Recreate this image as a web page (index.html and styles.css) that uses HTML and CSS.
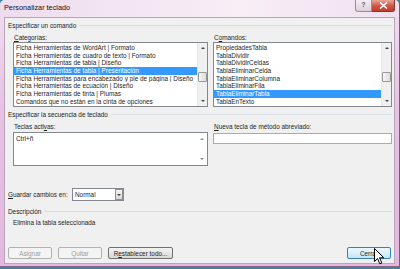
FILE: index.html
```html
<!DOCTYPE html>
<html lang="es">
<head>
  <meta charset="UTF-8">
  <title>Personalizar teclado</title>
  <link rel="stylesheet" href="styles.css">
</head>
<body>

  <div class="window">
    <div class="titlebar">
      <span class="title">Personalizar teclado</span>
      <div class="caption-btns">
        <span class="btn-help">?</span>
        <span class="btn-close">
          <svg width="9" height="7" viewBox="0 0 9 7"><path d="M1 0.5 L8 6.5 M8 0.5 L1 6.5" stroke="#fff" stroke-width="1.6"/></svg>
        </span>
      </div>
    </div>

    <div class="client">
      <div class="group-head"><span>Especificar un comando</span></div>
      <div class="cols">
        <div class="col col-left">
          <div class="lbl"><u>C</u>ategorías:</div>
          <div class="listbox">
            <ul class="items">
              <li>Ficha Herramientas de WordArt | Formato</li>
              <li>Ficha Herramientas de cuadro de texto | Formato</li>
              <li>Ficha Herramientas de tabla | Diseño</li>
              <li class="sel">Ficha Herramientas de tabla | Presentación</li>
              <li>Ficha Herramientas para encabezado y pie de página | Diseño</li>
              <li>Ficha Herramientas de ecuación | Diseño</li>
              <li>Ficha Herramientas de tinta | Plumas</li>
              <li>Comandos que no están en la cinta de opciones</li>
            </ul>
            <div class="vscroll">
              <span class="arrow up"></span>
              <span class="thumb"></span>
              <span class="arrow down"></span>
            </div>
          </div>
        </div>
        <div class="col col-right">
          <div class="lbl">C<u>o</u>mandos:</div>
          <div class="listbox">
            <ul class="items">
              <li>PropiedadesTabla</li>
              <li>TablaDividir</li>
              <li>TablaDividirCeldas</li>
              <li>TablaEliminarCelda</li>
              <li>TablaEliminarColumna</li>
              <li>TablaEliminarFila</li>
              <li class="sel">TablaEliminarTabla</li>
              <li>TablaEnTexto</li>
            </ul>
            <div class="vscroll">
              <span class="arrow up"></span>
              <span class="thumb"></span>
              <span class="arrow down"></span>
            </div>
          </div>
        </div>
      </div>

      <div class="group-head second"><span>Especificar la secuencia de teclado</span></div>
      <div class="cols">
        <div class="col col-left">
          <div class="lbl">Teclas acti<u>v</u>as:</div>
          <div class="keys-box">
            <span class="key-text">Ctrl+ñ</span>
            <div class="keys-scroll">
              <span class="arrow up dim"></span>
              <span class="arrow down dim"></span>
            </div>
          </div>
        </div>
        <div class="col col-right">
          <div class="lbl"><u>N</u>ueva tecla de método abreviado:</div>
          <div class="textbox"></div>
        </div>
      </div>

      <div class="save-row">
        <span class="save-lbl"><u>G</u>uardar cambios en:</span>
        <div class="combo">
          <span class="combo-val">Normal</span>
          <span class="combo-btn"><span class="arrow down"></span></span>
        </div>
      </div>

      <div class="group-head third"><span>Descripción</span></div>
      <p class="desc">Elimina la tabla seleccionada</p>

      <div class="buttons">
        <button class="btn disabled">Asignar</button>
        <button class="btn disabled">Quitar</button>
        <button class="btn wide">R<u>e</u>stablecer todo...</button>
        <button class="btn focus close-btn">Cerrar</button>
      </div>
    </div>

    <svg class="cursor" width="12" height="18" viewBox="0 0 12 18">
      <path d="M0.5 0.5 L0.5 13.5 L3.5 10.5 L5.8 15.8 L7.8 15 L5.6 9.8 L9.8 9.8 Z" fill="#fff" stroke="#000" stroke-width="1"/>
    </svg>
  </div>

</body>
</html>
```

FILE: styles.css
```css
* { box-sizing:border-box; margin:0; padding:0 }
body {
  width:400px; height:269px;
  overflow:hidden;
  background:#2b8c9c;
  font-family:"Liberation Sans", Arial, sans-serif;
  font-size:6.4px;
  color:#1e1e1e;
}

.window {
  position:relative;
  width:400px; height:267px;
  background:linear-gradient(to bottom, #f1def0, #e7c2e4 40%, #e3b7df);
  border-right:1px solid #7a5a78;
  border-bottom:1px solid #8a6488;
  border-radius:5px 5px 0 0;
}

.titlebar {
  height:17px;
  display:flex;
  justify-content:space-between;
  background:linear-gradient(to right, #efdcee, #f7eef6 60%, #f2e0f0);
  border-radius:5px 5px 0 0;
}
.title {
  padding:3px 0 0 4px;
  font-size:7.3px;
  color:#111;
}
.caption-btns {
  display:flex;
  height:12px;
  margin-right:4px;
}
.btn-help {
  width:17px;
  border:1px solid #9b8a9c;
  border-top:none;
  border-radius:0 0 0 3px;
  background:linear-gradient(to bottom, #f6eef6, #dccfdd);
  font-size:7px; font-weight:bold;
  color:#5a5a6a;
  text-align:center;
  line-height:10px;
}
.btn-close {
  width:23px;
  display:flex; align-items:center; justify-content:center;
  border:1px solid #7d3a30;
  border-top:none; border-left:none;
  border-radius:0 0 3px 0;
  background:linear-gradient(to bottom, #e9a89b, #cf5a48 50%, #c03d2b);
}

.client {
  height:247px;
  margin:0 4px 0 4px;
  background:#f0f0f0;
  border:1px solid #b9a4b8;
  padding:3px 2px 0 3px;
}

.group-head {
  display:flex;
  align-items:center;
  height:9px;
  line-height:9px;
  color:#222;
}
.group-head::after {
  content:'';
  flex:1;
  height:1px;
  margin-left:3px;
  background:#d5dfe5;
}
.group-head.second { margin-top:3px; }
.group-head.third { margin-top:6px; }

.cols {
  display:flex;
  gap:5px;
  padding-left:5px;
}
.col-left { width:195px; }
.col-right { flex:1; }
.lbl {
  margin-top:3px;
  height:9px;
  line-height:9px;
  padding-left:1px;
}

.listbox {
  display:flex;
  height:65px;
  background:#fff;
  border:1px solid #828790;
}
.items {
  flex:1;
  list-style:none;
  padding-top:1px;
}
.items li {
  height:7.7px;
  line-height:7.7px;
  padding-left:2px;
  white-space:nowrap;
  overflow:hidden;
}
.items li.sel {
  background:#3399ff;
  color:#fff;
}

.vscroll {
  width:10px;
  display:flex;
  flex-direction:column;
  align-items:center;
  background:#f0f0f0;
  border-left:1px solid #e8e8e8;
}
.arrow {
  width:0; height:0;
  border-left:2px solid transparent;
  border-right:2px solid transparent;
}
.arrow.up { border-bottom:2px solid #444; }
.arrow.down { border-top:2px solid #444; }
.arrow.dim.up { border-bottom-color:#8a8a8a; }
.arrow.dim.down { border-top-color:#8a8a8a; }
.vscroll .up { margin-top:4px; }
.vscroll .thumb {
  width:9px; height:10px;
  margin-top:23px;
  border:1px solid #9a9a9a;
  border-radius:1px;
  background:linear-gradient(to right, #f6f6f6, #dcdcdc);
}
.vscroll .down { margin-top:auto; margin-bottom:4px; }

.keys-box {
  display:flex;
  justify-content:space-between;
  margin-top:1px;
  height:34px;
  background:#fff;
  border:1px solid #828790;
}
.key-text {
  padding:2px 0 0 2px;
}
.keys-scroll {
  width:10px;
  display:flex;
  flex-direction:column;
  align-items:center;
  justify-content:space-between;
  padding:5px 0 5px;
}

.textbox {
  margin-top:2px;
  height:11px;
  background:#fff;
  border:1px solid #a5acb5;
}

.save-row {
  display:flex;
  align-items:center;
  margin-top:22px;
  height:13px;
}
.save-lbl { width:64px; }
.combo {
  display:flex;
  align-items:center;
  width:52px; height:13px;
  background:#fff;
  border:1px solid #828790;
}
.combo-val {
  flex:1;
  padding-left:2px;
}
.combo-btn {
  width:8px; height:11px;
  display:flex; align-items:center; justify-content:center;
  margin-right:0;
  border:1px solid #8f8f8f;
  background:linear-gradient(to bottom, #f4f4f4, #d8d8d8);
}

.desc {
  margin-top:2px;
  height:9px;
  line-height:9px;
  padding-left:5px;
}

.buttons {
  display:flex;
  gap:6px;
  margin-top:20px;
  height:12px;
}
.btn {
  width:44px;
  height:12px;
  font-family:inherit;
  font-size:6.4px;
  border-radius:2px;
  border:1px solid #707070;
  background:linear-gradient(to bottom, #f3f3f3, #e6e6e6 50%, #d8d8d8);
  color:#1e1e1e;
}
.btn.wide { width:65px; }
.btn.disabled {
  border-color:#adb2b5;
  background:#f4f4f4;
  color:#9d9d9d;
}
.btn.focus {
  border-color:#3c7fb1;
  background:linear-gradient(to bottom, #eaf6fd, #d9f0fc 50%, #bee6fd);
}
.close-btn { margin-left:auto; margin-right:1px; }

.cursor {
  position:absolute;
  left:374px; top:248px;
}
```
